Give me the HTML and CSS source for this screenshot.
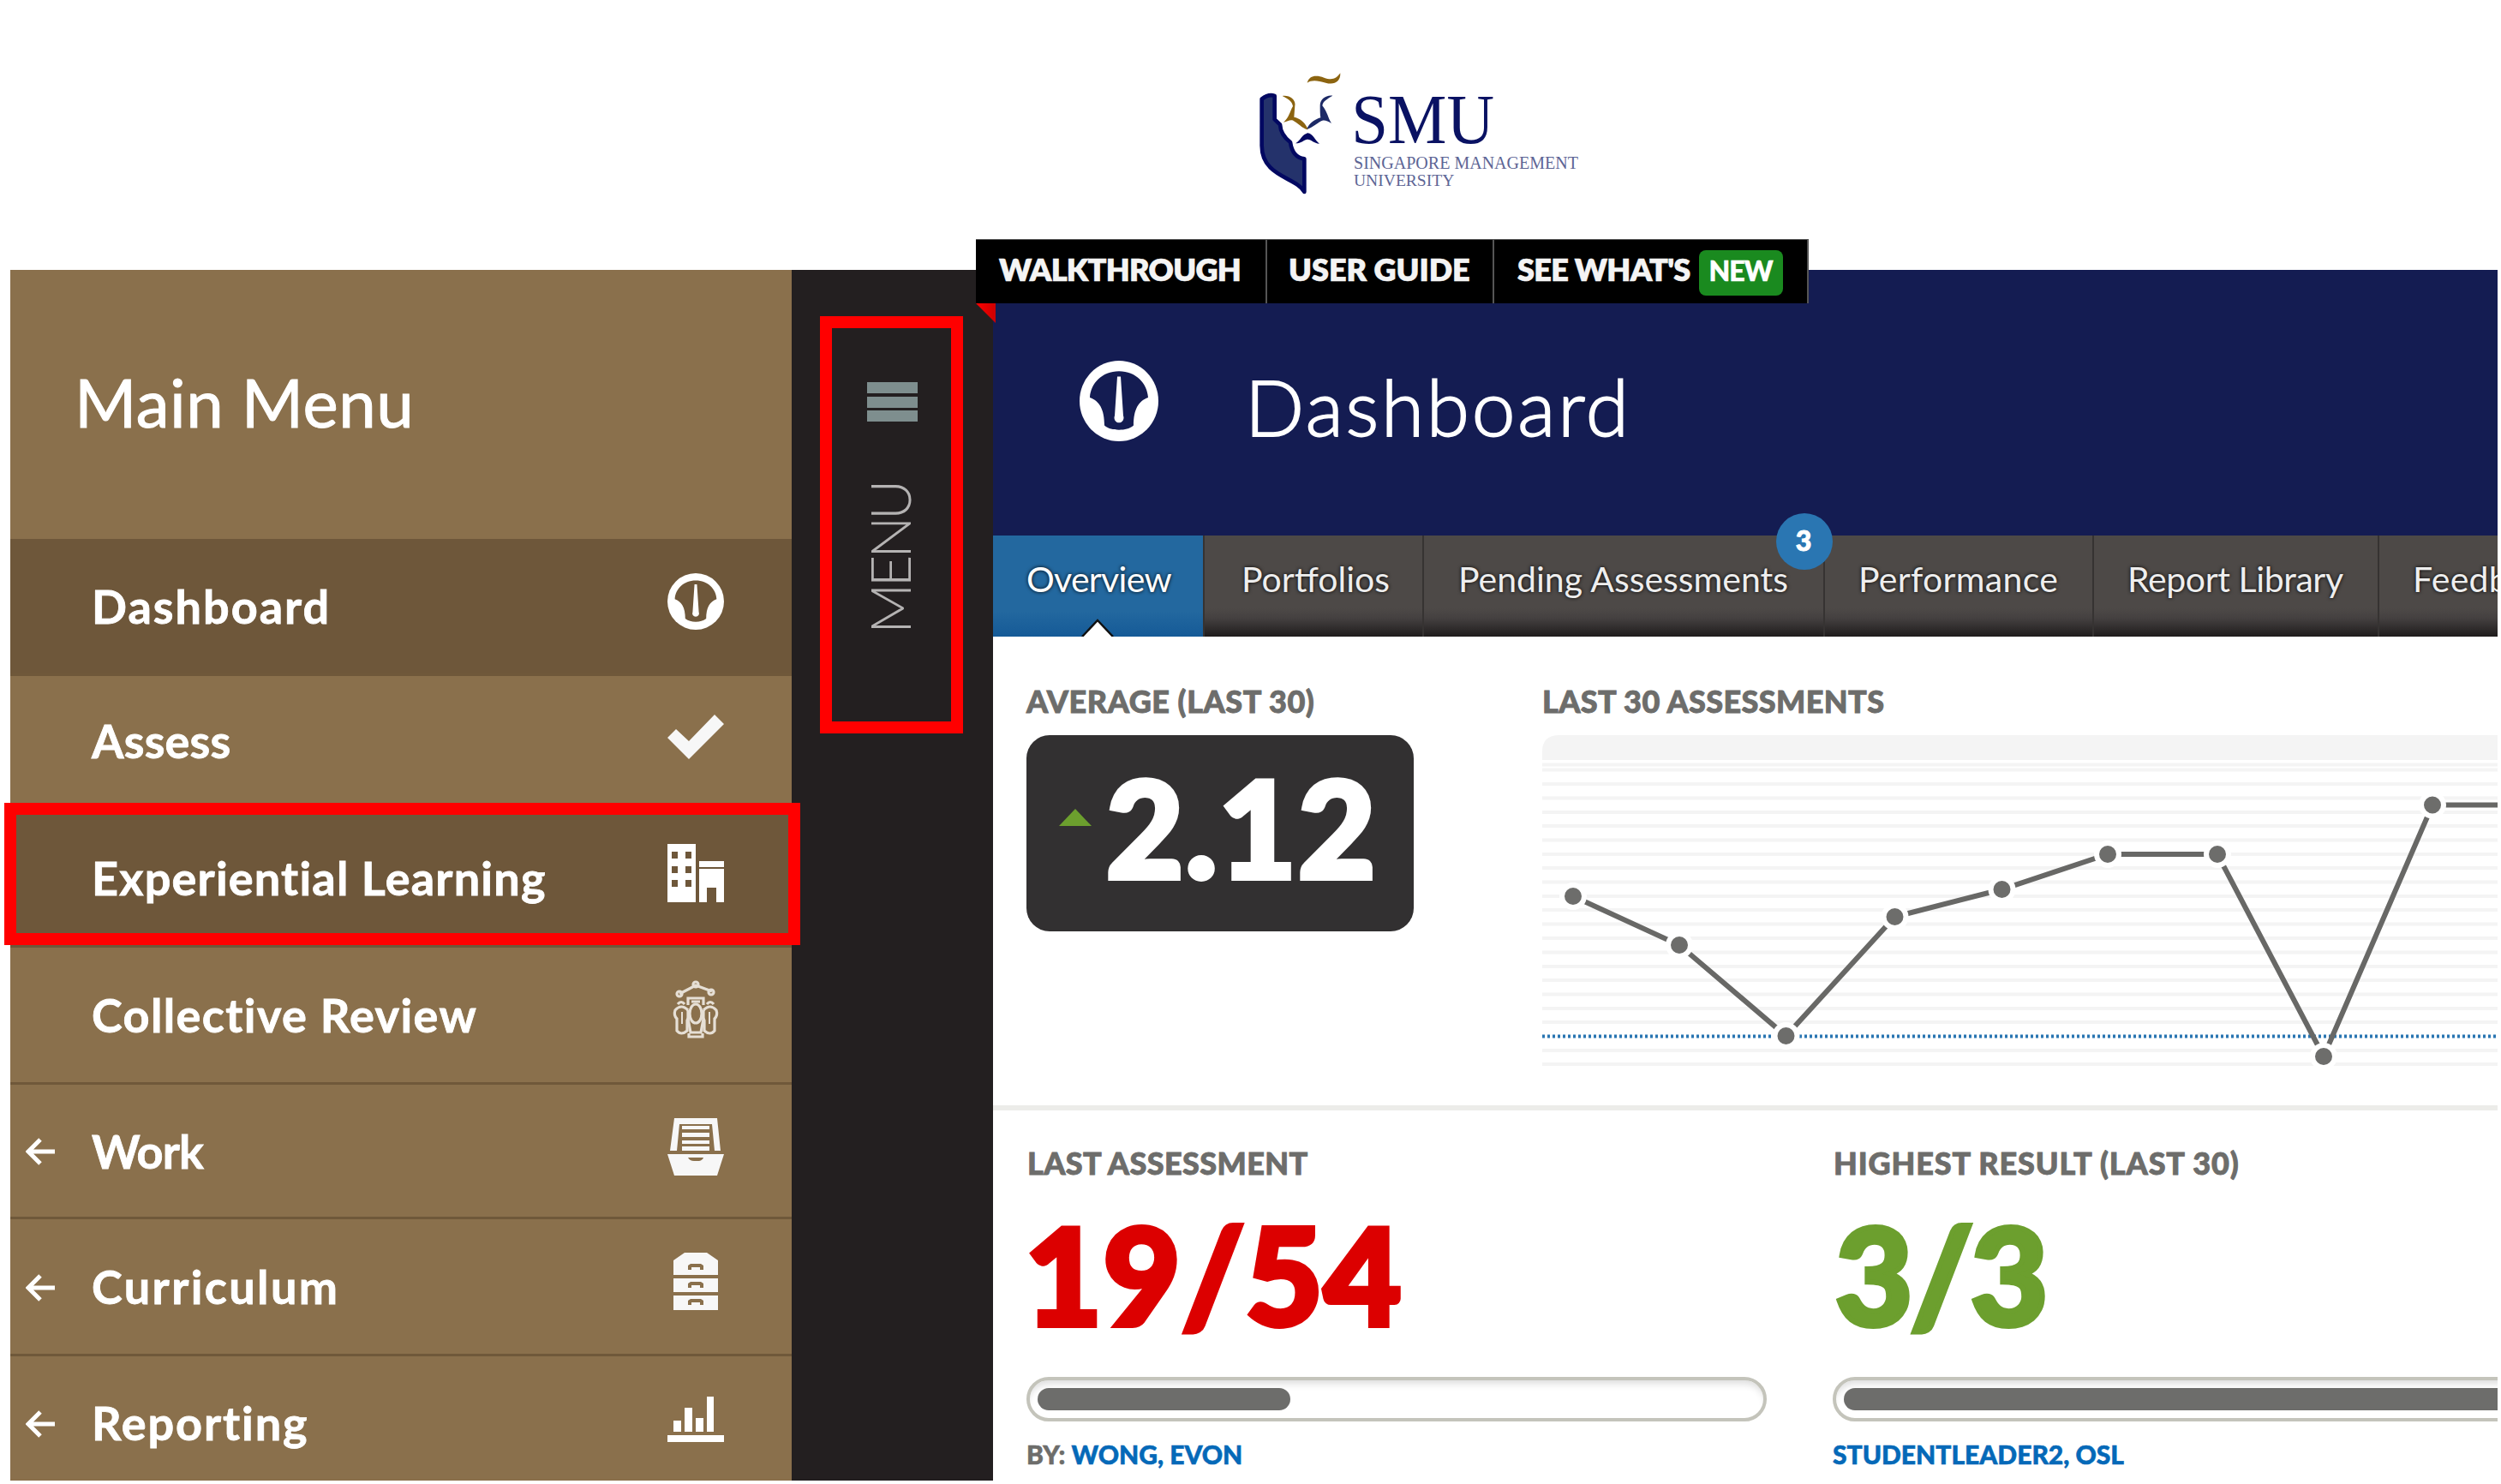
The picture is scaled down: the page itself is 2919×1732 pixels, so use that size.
FILE: index.html
```html
<!DOCTYPE html>
<html lang="en">
<head>
<meta charset="utf-8">
<title>Dashboard</title>
<link rel="stylesheet" href="styles.css">
</head>
<body>
<svg class="defs" width="0" height="0" aria-hidden="true">
  <symbol id="gauge" viewBox="0 0 92 92">
    <circle cx="46" cy="46" r="46"/>
    <path class="cut" d="M46 12C26 12 13 26 12 42C23 46 29 55 29 74C34 78 39 79 46 79S58 78 63 74C63 55 69 46 80 42C79 26 66 12 46 12Z"/>
    <path d="M44 18h4l3 45a5.500 5.500 0 1 1-10 0z"/>
  </symbol>
  <symbol id="arrow" viewBox="0 0 34 32">
    <path class="line" d="M17 2L3 16L17 30M3 16H34"/>
  </symbol>
</svg>

<header class="masthead">
  <svg class="logo" viewBox="0 0 1290 570" role="img" aria-label="SMU">
    <path fill="#24326b" stroke="#020861" stroke-width="14" stroke-linejoin="round" d="M98 167Q122 148 143 156V238L162 256Q164 292 198 318Q206 372 247 376V492C220 440 98 440 98 330Z"/>
    <path fill="#8c6410" d="M257 110C264 84 288 82 316 92S358 96 373 76C374 108 350 118 322 110S274 98 257 110Z"/>
    <path fill="#8c6410" d="M170 156C198 152 218 172 214 190L211 230C230 234 250 246 260 274C240 270 224 250 208 242C196 238 188 246 174 248C194 232 196 210 207 192C204 174 190 166 170 156Z"/>
    <path fill="#1d2a66" d="M346 155C322 152 302 168 302 190C302 206 302 222 304 232C284 238 264 250 256 272C276 268 296 246 310 242C320 240 330 244 342 252C330 234 328 212 310 190C312 174 328 166 346 155Z"/>
    <path fill="#020861" d="M216 322C234 312 240 288 259 286C278 288 284 312 300 323C280 322 272 308 259 308S238 322 216 322Z"/>
    <g class="logo-text">
      <text x="412" y="322" font-size="250" textLength="500" lengthAdjust="spacingAndGlyphs">SMU</text>
      <g class="logo-sub">
        <text x="420" y="411" font-size="64" textLength="786" lengthAdjust="spacingAndGlyphs">SINGAPORE MANAGEMENT</text>
        <text x="420" y="471" font-size="58" textLength="352" lengthAdjust="spacingAndGlyphs">UNIVERSITY</text>
      </g>
    </g>
  </svg>
</header>

<div class="app">
  <aside class="sidebar">
    <h2 class="sidebar-title">Main Menu</h2>
    <nav>
      <a class="item item-active"><span class="back"></span><span class="label l-dash">Dashboard</span>
        <svg class="icon on-dark" width="66" height="66"><use href="#gauge"/></svg></a>
      <a class="item item-short"><span class="back"></span><span class="label l-assess">Assess</span>
        <svg class="icon soft" width="66" height="52" viewBox="0 0 66 52"><path d="M55 0L66 11L25 52L0 27L10 17L25 31Z"/></svg></a>
      <a class="item item-active"><span class="back"></span><span class="label l-exp">Experiential Learning</span>
        <svg class="icon" width="66" height="68" viewBox="0 0 66 68"><path fill-rule="evenodd" d="M0 0H33V68H0ZM5 9V17H12V9ZM21 9V17H28V9ZM5 26V34H12V26ZM21 26V34H28V26ZM5 42V50H12V42ZM21 42V50H28V42Z"/><path d="M37 20H66V27H37ZM37 29H66V68H57V51H46V68H37Z"/></svg></a>
      <a class="item"><span class="back"></span><span class="label l-coll">Collective Review</span>
        <svg class="icon people" width="66" height="68" viewBox="0 0 66 68">
          <path d="M14 15L33 5L52 12"/><circle cx="33" cy="4" r="3"/><circle cx="14" cy="15" r="3"/><circle cx="51" cy="13" r="3"/>
          <path d="M24 28V20H42V28M28 24H38"/>
          <path d="M12 27Q16 22 20 27M46 27Q50 22 54 27"/>
          <ellipse cx="33" cy="38" rx="7" ry="11"/>
          <path d="M24 34V44L27 60H39L42 44V34M25 61V65H41V61"/>
          <path d="M24 34Q16 26 9 34Q7 40 11 44V58Q16 64 23 58V46L26 40"/>
          <path d="M42 34Q50 26 57 34Q59 40 55 44V58Q50 64 43 58V46L40 40"/>
          <path d="M17 36V50M49 36V50" stroke-width="2"/>
        </svg></a>
      <a class="item item-mid"><span class="back"><svg width="34" height="32"><use href="#arrow"/></svg></span><span class="label l-work">Work</span>
        <svg class="icon soft" width="66" height="67" viewBox="0 0 66 67"><path d="M8 0H58L62 38H55L52 7H14L11 38H3Z" /><path d="M17 9H49V13H17ZM17 17H49V22H17ZM17 26H49V30H17ZM17 33H49V38H17Z"/><path fill-rule="evenodd" d="M0 42H66L58 67H8ZM24 46Q26 50 31 50H37Q41 49 42 46Z"/></svg></a>
      <a class="item"><span class="back"><svg width="34" height="32"><use href="#arrow"/></svg></span><span class="label l-curr">Curriculum</span>
        <svg class="icon soft" width="66" height="67" viewBox="0 0 66 67"><path fill-rule="evenodd" d="M7 9L20 0H46L59 9V26H7ZM24 20H28V17H38V20H42V15L39 13H27L24 15Z"/><path fill-rule="evenodd" d="M7 30H59V46H7ZM24 41H28V38H38V41H42V36L39 34H27L24 36Z"/><path fill-rule="evenodd" d="M7 50H59V67H7ZM24 61H28V58H38V61H42V56L39 54H27L24 56Z"/></svg></a>
      <a class="item item-last"><span class="back"><svg width="34" height="32"><use href="#arrow"/></svg></span><span class="label l-rep">Reporting</span>
        <svg class="icon" width="66" height="53" viewBox="0 0 66 53"><path d="M0 45H66V53H0ZM7 28H16V41H7ZM20 13H29V41H20ZM33 25H42V41H33ZM46 0H54V41H46Z"/></svg></a>
    </nav>
    <div class="highlight highlight-item"></div>
  </aside>

  <div class="rail">
    <div class="highlight highlight-rail">
      <div class="burger"><i></i><i></i><i></i></div>
      <span class="rail-label">MENU</span>
    </div>
  </div>

  <main class="main">
    <div class="page-head">
      <svg class="page-icon" width="92" height="94" viewBox="0 0 92 92" preserveAspectRatio="none"><use href="#gauge"/></svg>
      <h1 class="page-title">Dashboard</h1>
    </div>
    <nav class="tabs">
      <a class="tab tab-current">Overview<svg class="notch" width="38" height="21" viewBox="0 0 38 21"><path d="M1 21L19 2L37 21"/></svg></a>
      <a class="tab tab-portfolios">Portfolios</a>
      <a class="tab tab-pending">Pending Assessments<span class="badge">3</span></a>
      <a class="tab tab-performance">Performance</a>
      <a class="tab tab-library">Report Library</a>
      <a class="tab tab-feedback">Feedback</a>
    </nav>

    <section class="summary">
      <div>
        <h3 class="caption c-average">AVERAGE (LAST 30)</h3>
        <div class="score"><svg width="38" height="20"><path d="M19 0L38 20H0Z"/></svg><span>2.12</span></div>
      </div>
      <div>
        <h3 class="caption c-last30">LAST 30 ASSESSMENTS</h3>
        <svg class="chart" width="1115" height="390" viewBox="0 0 1115 390">
          <path class="band" d="M0 30V20Q0 1 20 1H1115V30Z"/>
          <path class="rules" d="M0 35.500H1115M0 41.500H1115M0 58H1115M0 74.500H1115M0 91H1115M0 107H1115M0 123.500H1115M0 140H1115M0 156H1115M0 172.500H1115M0 189H1115M0 205H1115M0 221.500H1115M0 238H1115M0 254.500H1115M0 271H1115M0 287H1115M0 303.500H1115M0 320H1115M0 336H1115M0 369H1115M0 385H1115"/>
          <path class="target" d="M0 352.500H1115"/>
          <path class="series" d="M36 189L160 246L284.500 352L411.500 213L536.500 181L660 140L788 140L912 376L1039 82.500H1170"/>
          <g class="dots"><circle cx="36" cy="189" r="13"/><circle cx="160" cy="246" r="13"/><circle cx="284.500" cy="352" r="13"/><circle cx="411.500" cy="213" r="13"/><circle cx="536.500" cy="181" r="13"/><circle cx="660" cy="140" r="13"/><circle cx="788" cy="140" r="13"/><circle cx="912" cy="376" r="13"/><circle cx="1039" cy="82.500" r="13"/></g>
        </svg>
      </div>
    </section>

    <section class="results">
      <div class="result">
        <h3 class="caption c-last">LAST ASSESSMENT</h3>
        <div class="figure low">19/54</div>
        <div class="meter"><i style="width:295px"></i></div>
        <p class="by">BY: <a>WONG, EVON</a></p>
      </div>
      <div class="result">
        <h3 class="caption c-highest">HIGHEST RESULT (LAST 30)</h3>
        <div class="figure high">3/3</div>
        <div class="meter"><i style="width:838px"></i></div>
        <p class="by"><a>STUDENTLEADER2, OSL</a></p>
      </div>
    </section>
  </main>

  <nav class="quick">
    <a class="q-walk">WALKTHROUGH</a><a class="q-guide">USER GUIDE</a><a class="q-new"><span>SEE WHAT'S</span><b>NEW</b></a>
  </nav>
</div>
</body>
</html>
```
FILE: styles.css
```css
* { box-sizing: border-box; }
body { margin: 0; width: 2919px; height: 1732px; overflow: hidden; background: #fff; font-family: Lato, "Open Sans", sans-serif; }
h1, h2, h3, p { margin: 0; font-weight: 400; }
svg { display: block; }
.defs { position: absolute; }

.masthead { height: 315px; padding: 60px 0 0 1440px; }
.logo { width: 430px; height: 190px; }
.logo-text { font-family: "Liberation Serif", serif; fill: #0a1263; }
.logo-sub { fill: #5d6595; }

.app { position: relative; display: flex; width: 2903px; height: 1413px; margin-left: 12px; }

/* left menu */
.sidebar { position: relative; flex: none; width: 912px; background: #8a704c; color: #fff; }
.sidebar-title { height: 314px; padding-left: 75px; font-size: 78px; line-height: 308px; letter-spacing: .5px; -webkit-text-stroke: 1px #fff; }
.item { display: flex; align-items: center; height: 160px; padding: 0 79px 0 18px; border-bottom: 3px solid #6f583a; }
.item-short { height: 157px; }
.item-mid { height: 157px; }
.item-last { height: 148px; border: 0; padding-top: 8px; }
.item-active { background: #6e573a; }
.back { width: 77px; margin-top: 2px; }
.label { flex: 1; font-size: 54px; font-weight: 700; line-height: 66px; margin-top: 0; -webkit-text-stroke: .8px #fff; }
.l-dash { letter-spacing: 2px; }
.l-assess { letter-spacing: .2px; margin-top: -3px; }
.l-exp { letter-spacing: 1.2px; }
.l-coll { letter-spacing: 1.4px; }
.l-work { letter-spacing: -.9px; margin-top: 2px; }
.l-curr { letter-spacing: 2.4px; }
.l-rep { letter-spacing: 1.9px; }
.icon { fill: #fff; margin-top: -12px; overflow: visible; }
.item-mid .icon, .item-last .icon { margin-top: -9px; }
.soft { fill: #f7f7f7; }
.cut { fill: currentColor; }
.on-dark { color: #6e573a; }
.line { fill: none; stroke: #fff; stroke-width: 5; }
.people { fill: none; stroke: #e6dfd5; stroke-width: 3.200; }

/* annotation frames */
.highlight { border: 14px solid #f00; }
.highlight-item { position: absolute; left: -7px; top: 622px; width: 929px; height: 166px; z-index: 2; }
.highlight-rail { width: 167px; height: 487px; }

.rail { flex: none; width: 235px; padding: 54px 0 0 33px; background: #231f20; }
.burger { display: flex; flex-direction: column; gap: 3.500px; margin: 63px 0 0 41px; }
.burger i { width: 59px; height: 13px; background: #7e8e8e; }
.rail-label { display: block; width: 78px; margin: 72px 0 0 28px; writing-mode: vertical-rl; transform: rotate(180deg); font-size: 65px; font-weight: 300; line-height: 78px; letter-spacing: -4.300px; color: #b5b3b3; }

/* content */
.main { flex: 1; min-width: 0; overflow: hidden; background: #fff; }
.page-head { display: flex; height: 310px; padding-left: 101px; background: #141c52; color: #fff; }
.page-icon { margin-top: 106px; fill: #fff; color: #141c52; }
.page-title { margin: 104px 0 0 101px; font-size: 91px; line-height: 110px; font-weight: 300; letter-spacing: 2.800px; -webkit-text-stroke: 1.800px #fff; }

.tabs { display: flex; width: 1900px; height: 118px; }
.tab { position: relative; flex: none; width: 280px; padding-left: 43px; line-height: 102px; font-size: 41px; color: #eee; text-shadow: 0 0 4px #000; border-left: 2px solid #363332; background: linear-gradient(#4d4947 0 72%, #444040 82%, #1f1c1c); }
.tab-current { width: 245px; padding-left: 39px; border: 0; color: #fff; letter-spacing: -.7px; background: linear-gradient(#23689f 0 75%, #155a97); }
.notch { position: absolute; left: 103px; bottom: 0; fill: #fff; stroke: #111; stroke-width: 2.500; }
.tab-portfolios { width: 256px; }
.tab-pending { width: 468px; padding-left: 40px; }
.tab-performance { width: 314px; padding-left: 39px; letter-spacing: .3px; }
.tab-library { width: 333px; padding-left: 39px; letter-spacing: -.4px; }
.tab-feedback { padding-left: 39px; letter-spacing: .3px; }
.badge { position: absolute; z-index: 1; right: -11px; top: -26px; width: 66px; height: 66px; border-radius: 50%; background: #2a76b2; color: #fff; font-size: 32px; font-weight: 900; line-height: 63px; text-align: center; text-shadow: none; -webkit-text-stroke: 1px #fff; padding-right: 2px; }

.caption { font-size: 36px; line-height: 45px; font-weight: 900; color: #6d6d6b; white-space: nowrap; -webkit-text-stroke: .9px #6d6d6b; }
.c-average { letter-spacing: .55px; }
.c-last30 { letter-spacing: .4px; }
.c-last { letter-spacing: .4px; }
.c-highest { letter-spacing: .87px; }

.summary { display: grid; grid-template-columns: 602px 1fr; height: 553px; padding: 53px 0 0 39px; border-bottom: 6px solid #ecece9; }
.summary .caption { margin-bottom: 17px; }
.chart { margin-top: -1px; }
.score { display: flex; align-items: center; gap: 17px; width: 452px; height: 229px; padding-left: 38px; border-radius: 27px; background: #323031; color: #fff; font-size: 156px; font-weight: 900; line-height: 212px; letter-spacing: 2px; -webkit-text-stroke: 6px #fff; }
.score span { margin-top: -15px; }
.score svg { margin-top: -38px; fill: #6c9f2e; }
.band { fill: #f4f4f4; }
.rules { fill: none; stroke: #f4f4f4; stroke-width: 4; }
.target { fill: none; stroke: #2a76b2; stroke-width: 4; stroke-dasharray: 3 3; }
.series { fill: none; stroke: #686866; stroke-width: 6; }
.dots { fill: #6d6d6b; stroke: #fff; stroke-width: 6; }

.results { display: grid; grid-template-columns: 941px 941px; padding: 39px 0 0 39px; }
.results .caption { margin-bottom: 27px; }
.result .caption { padding-left: 1px; }
.figure { height: 158px; line-height: 160px; font-size: 156px; font-weight: 900; }
.low { color: #dc0000; margin-left: -2px; letter-spacing: 1px; -webkit-text-stroke: 6px #dc0000; }
.high { color: #6c9f2e; letter-spacing: -3px; padding-left: 3px; -webkit-text-stroke: 6px #6c9f2e; }
.meter { width: 864px; height: 52px; margin-top: 42px; padding: 9px; border: 4px solid #c4c4bb; border-radius: 26px; box-shadow: inset 0 8px 8px -4px #ddd; }
.meter i { display: block; height: 26px; border-radius: 13px; background: #6d6d6b; }
.by { margin-top: 20px; font-size: 30px; line-height: 36px; font-weight: 900; color: #6d6d6b; -webkit-text-stroke: .6px; }
.by a { color: #0569b8; }

/* help links above the page header */
.quick { position: absolute; left: 1127px; top: -36px; display: flex; height: 75px; background: #000; color: #f4f4f4; font-size: 36px; font-weight: 800; line-height: 69px; border-top: 1px solid #555; -webkit-text-stroke: .6px; }
.quick a { height: 74px; border-right: 2px solid #555; }
.quick::after { content: ""; position: absolute; left: 0; top: 74px; width: 23px; height: 23px; background: linear-gradient(90deg, #f00, #c00); clip-path: polygon(0 0, 100% 0, 100% 100%); }
.q-walk { width: 340px; padding-left: 27px; letter-spacing: -.7px; }
.q-guide { width: 265px; padding-left: 25px; }
.quick .q-new { display: flex; width: 367px; padding-left: 27px; letter-spacing: -.7px; }
.q-new b { width: 98px; height: 53px; margin: 12px 0 0 10px; border-radius: 8px; background: #1a8a1f; color: #fff; font-size: 32px; font-weight: 900; line-height: 48px; letter-spacing: -1px; text-align: center; }
```
